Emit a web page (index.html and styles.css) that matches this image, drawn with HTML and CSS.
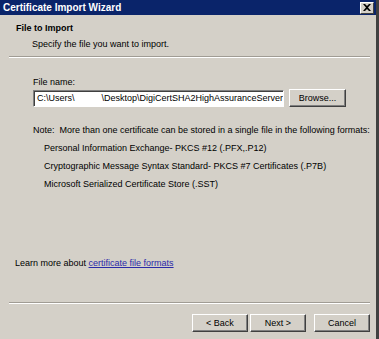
FILE: index.html
```html
<!DOCTYPE html>
<html lang="en">
<head>
    <meta charset="UTF-8">
    <title>Certificate Import Wizard</title>
    <link rel="stylesheet" href="styles.css">
</head>
<body>
    <div class="dialog">
        <div class="titlebar">
            <span class="title">Certificate Import Wizard</span>
            <span class="close-btn">
                <svg width="8" height="7" viewBox="0 0 8 7"><path d="M0 0 L2 0 L4 2 L6 0 L8 0 L5 3.5 L8 7 L6 7 L4 5 L2 7 L0 7 L3 3.5 Z" fill="#000"/></svg>
            </span>
        </div>

        <div class="header">
            <div class="header-title">File to Import</div>
            <div class="header-sub">Specify the file you want to import.</div>
        </div>
        <div class="sep"></div>

        <div class="content">
            <label class="field-label" for="file-name">File name:</label>
            <div class="file-row">
                <div class="file-input" id="file-name">
                    <span>C:\Users\</span><span class="redact"></span><span>\Desktop\DigiCertSHA2HighAssuranceServer</span>
                </div>
                <button class="btn browse-btn">Browse...</button>
            </div>

            <p class="note">Note:&nbsp; More than one certificate can be stored in a single file in the following formats:</p>
            <ul class="formats">
                <li>Personal Information Exchange- PKCS #12 (.PFX,.P12)</li>
                <li>Cryptographic Message Syntax Standard- PKCS #7 Certificates (.P7B)</li>
                <li>Microsoft Serialized Certificate Store (.SST)</li>
            </ul>
        </div>

        <div class="learn">Learn more about <a href="#">certificate file formats</a></div>

        <div class="sep"></div>
        <div class="button-group">
            <button class="btn">&lt; Back</button>
            <button class="btn">Next &gt;</button>
            <button class="btn cancel-btn">Cancel</button>
        </div>
    </div>
</body>
</html>
```

FILE: styles.css
```css
body {
    margin: 0;
    background: #d4d0c8;
    font-family: "Liberation Sans", Arial, sans-serif;
    font-size: 9px;
    color: #000;
}
.dialog {
    width: 376px;
    height: 339px;
    border-right: 3px solid #404040;
    background: #d4d0c8;
    display: flex;
    flex-direction: column;
}
.titlebar {
    height: 15px;
    background: #0a246a;
    display: flex;
    align-items: center;
    justify-content: space-between;
    padding: 0 2px 0 3px;
}
.title {
    color: #fff;
    font-weight: bold;
    font-size: 10px;
}
.close-btn {
    width: 12px;
    height: 10px;
    background: #d4d0c8;
    border: 1px solid;
    border-color: #fff #404040 #404040 #fff;
    display: flex;
    align-items: center;
    justify-content: center;
}
.header {
    padding: 8px 0 0 16px;
    height: 33px;
}
.header-title {
    font-weight: bold;
    margin-bottom: 6px;
}
.header-sub {
    padding-left: 16px;
}
.sep {
    margin: 0 6px 0 9px;
    border-top: 1px solid #a09c94;
    border-bottom: 1px solid #fff;
}
.content {
    padding: 19px 0 0 33px;
    height: 181px;
}
.field-label {
    display: block;
    margin-bottom: 2px;
}
.file-row {
    display: flex;
    gap: 5px;
    align-items: center;
}
.file-input {
    width: 246px;
    height: 15px;
    background: #fff;
    border: 1px solid;
    border-color: #808080 #fff #fff #808080;
    box-shadow: inset 1px 1px 0 #404040;
    display: flex;
    align-items: center;
    padding-left: 3px;
    white-space: nowrap;
    overflow: hidden;
}
.redact {
    display: inline-block;
    width: 44px;
    height: 15px;
}
.btn {
    font-family: "Liberation Sans", Arial, sans-serif;
    font-size: 9px;
    background: #d4d0c8;
    border: 1px solid;
    border-color: #fff #404040 #404040 #fff;
    box-shadow: inset -1px -1px 0 #808080;
    width: 56px;
    height: 18px;
    padding: 0;
    color: #000;
}
.browse-btn {
    width: 57px;
}
.note {
    margin: 18px 0 0 0;
}
.formats {
    list-style: none;
    margin: 8px 0 0 0;
    padding: 0 0 0 11px;
}
.formats li {
    margin-bottom: 8px;
}
.learn {
    padding-left: 15px;
    height: 44px;
}
.learn a {
    color: #2a2aa8;
}
.button-group {
    display: flex;
    justify-content: flex-end;
    gap: 2px;
    padding: 10px 6px 0 0;
}
.cancel-btn {
    margin-left: 6px;
}
```
